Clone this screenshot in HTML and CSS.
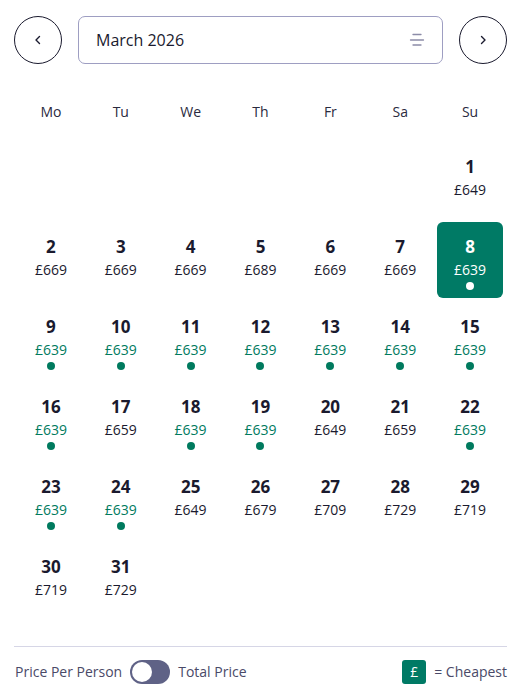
FILE: index.html
```html
<!DOCTYPE html>
<html>
<head>
<meta charset="utf-8">
<link rel="stylesheet" href="styles.css">
</head>
<body>
<div class="cal">
  <div class="top">
    <button class="nav"><svg width="12" height="12" viewBox="0 0 12 12"><path d="M7.5 2.5 4 6l3.5 3.5" fill="none" stroke="#1a1a2e" stroke-width="1.4" stroke-linecap="round" stroke-linejoin="round"/></svg></button>
    <div class="month">
      <span>March 2026</span>
      <svg width="16" height="16" viewBox="0 0 16 16"><path d="M4 2.5h8M1.5 8h13M4 13h8" stroke="#8c8ca8" stroke-width="1.3" stroke-linecap="round"/></svg>
    </div>
    <button class="nav"><svg width="12" height="12" viewBox="0 0 12 12"><path d="M4.5 2.5 8 6l-3.5 3.5" fill="none" stroke="#1a1a2e" stroke-width="1.4" stroke-linecap="round" stroke-linejoin="round"/></svg></button>
  </div>
  <div class="grid">
    <div class="dow">Mo</div><div class="dow">Tu</div><div class="dow">We</div><div class="dow">Th</div><div class="dow">Fr</div><div class="dow">Sa</div><div class="dow">Su</div>
    <div class="cell empty"></div><div class="cell empty"></div><div class="cell empty"></div><div class="cell empty"></div><div class="cell empty"></div><div class="cell empty"></div>
    <div class="cell"><b>1</b><span>£649</span></div>
    <div class="cell"><b>2</b><span>£669</span></div>
    <div class="cell"><b>3</b><span>£669</span></div>
    <div class="cell"><b>4</b><span>£669</span></div>
    <div class="cell"><b>5</b><span>£689</span></div>
    <div class="cell"><b>6</b><span>£669</span></div>
    <div class="cell"><b>7</b><span>£669</span></div>
    <div class="cell cheap selected"><b>8</b><span>£639</span><i></i></div>
    <div class="cell cheap"><b>9</b><span>£639</span><i></i></div>
    <div class="cell cheap"><b>10</b><span>£639</span><i></i></div>
    <div class="cell cheap"><b>11</b><span>£639</span><i></i></div>
    <div class="cell cheap"><b>12</b><span>£639</span><i></i></div>
    <div class="cell cheap"><b>13</b><span>£639</span><i></i></div>
    <div class="cell cheap"><b>14</b><span>£639</span><i></i></div>
    <div class="cell cheap"><b>15</b><span>£639</span><i></i></div>
    <div class="cell cheap"><b>16</b><span>£639</span><i></i></div>
    <div class="cell"><b>17</b><span>£659</span></div>
    <div class="cell cheap"><b>18</b><span>£639</span><i></i></div>
    <div class="cell cheap"><b>19</b><span>£639</span><i></i></div>
    <div class="cell"><b>20</b><span>£649</span></div>
    <div class="cell"><b>21</b><span>£659</span></div>
    <div class="cell cheap"><b>22</b><span>£639</span><i></i></div>
    <div class="cell cheap"><b>23</b><span>£639</span><i></i></div>
    <div class="cell cheap"><b>24</b><span>£639</span><i></i></div>
    <div class="cell"><b>25</b><span>£649</span></div>
    <div class="cell"><b>26</b><span>£679</span></div>
    <div class="cell"><b>27</b><span>£709</span></div>
    <div class="cell"><b>28</b><span>£729</span></div>
    <div class="cell"><b>29</b><span>£719</span></div>
    <div class="cell"><b>30</b><span>£719</span></div>
    <div class="cell"><b>31</b><span>£729</span></div>
  </div>
  <div class="footer">
    <div class="toggle-group">
      <span>Price Per Person</span>
      <span class="toggle"><span class="knob"></span></span>
      <span>Total Price</span>
    </div>
    <div class="legend">
      <span class="badge">£</span>
      <span>= Cheapest</span>
    </div>
  </div>
</div>
</body>
</html>
```

FILE: styles.css
```css
* { box-sizing: border-box; }
html, body { margin: 0; padding: 0; background: #fff; }
body { font-family: "Open Sans", "Noto Sans", sans-serif; color: #1a1a2e; }
.cal { width: 521px; padding: 16px 14px 0; }
.top { display: flex; align-items: center; gap: 16px; height: 48px; }
.nav {
  width: 48px; height: 48px; border-radius: 50%;
  border: 1px solid #1a1a2e; background: #fff; padding: 0;
  display: flex; align-items: center; justify-content: center; flex: none;
}
.month {
  flex: 1; height: 48px; border: 1px solid #9e9ec2; border-radius: 7px;
  display: flex; align-items: center; justify-content: space-between;
  padding: 0 17px 0 17px; font-size: 16px; color: #1a1a2e;
}
.grid {
  display: grid; grid-template-columns: repeat(7, 1fr);
  grid-template-rows: 74px; grid-auto-rows: 76px;
  gap: 4px; margin: 0 0 0 4px; width: 485px;
}
.dow {
  font-size: 14px; line-height: 20px; color: #2a2a3e;
  text-align: center; padding-top: 38px;
}
.cell {
  border-radius: 6px; display: flex; flex-direction: column; align-items: center;
  padding-top: 13px;
}
.cell b { font-size: 17px; font-weight: 700; line-height: 24px; color: #1a1a2e; }
.cell span { font-size: 14px; line-height: 20px; margin-top: 1px; color: #1a1a2e; }
.cell i { width: 8px; height: 8px; border-radius: 50%; background: #007a5e; margin-top: 2px; }
.cell.cheap span { color: #007a5e; }
.cell.selected { background: #007a65; }
.cell.selected b, .cell.selected span { color: #fff; }
.cell.selected i { background: #fff; }
.footer {
  margin-top: 28px; border-top: 1px solid #d6d6e6; height: 50px;
  display: flex; align-items: center; justify-content: space-between;
  font-size: 14px; color: #4a4a68; padding-left: 1px;
}
.toggle-group { display: flex; align-items: center; gap: 8px; }
.toggle {
  width: 40px; height: 24px; border-radius: 12px; background: #5f6286;
  position: relative; display: inline-block;
}
.knob {
  position: absolute; left: 2px; top: 2px; width: 20px; height: 20px;
  border-radius: 50%; background: #fff;
}
.legend { display: flex; align-items: center; gap: 8px; }
.badge {
  width: 24px; height: 24px; border-radius: 3px; background: #007a65; color: #fff;
  display: flex; align-items: center; justify-content: center; font-size: 14px;
}
```
